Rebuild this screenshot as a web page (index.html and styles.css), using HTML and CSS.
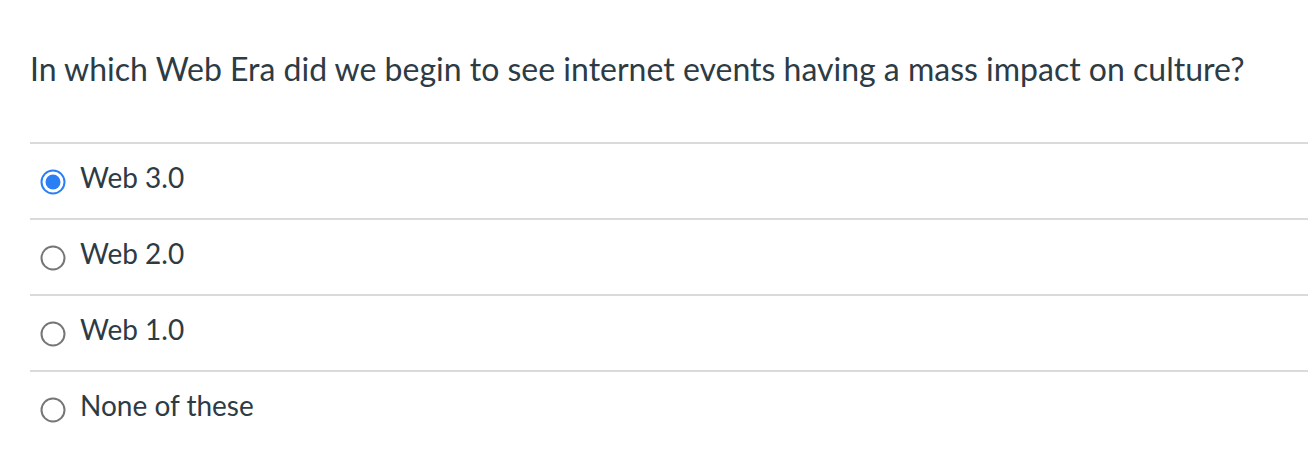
FILE: index.html
```html
<!DOCTYPE html>
<html lang="en">
<head>
  <meta charset="UTF-8">
  <title>Quiz Question</title>
  <link rel="stylesheet" href="styles.css">
</head>
<body>
  <!-- Question -->
  <div class="question">
    <h1 class="question-text">In which Web Era did we begin to see internet events having a mass impact on culture?</h1>

    <!-- Answers -->
    <ul class="answers">
      <li class="answer selected">
        <svg class="radio" width="26" height="26" viewBox="0 0 26 26">
          <circle cx="13" cy="13" r="11.5" fill="#fff" stroke="#2b7ff5" stroke-width="2"/>
          <circle cx="13" cy="13" r="7.5" fill="#2b7ff5"/>
        </svg>
        <span class="label">Web 3.0</span>
      </li>
      <li class="answer">
        <svg class="radio" width="26" height="26" viewBox="0 0 26 26">
          <circle cx="13" cy="13" r="11.5" fill="#fff" stroke="#767676" stroke-width="2"/>
        </svg>
        <span class="label">Web 2.0</span>
      </li>
      <li class="answer">
        <svg class="radio" width="26" height="26" viewBox="0 0 26 26">
          <circle cx="13" cy="13" r="11.5" fill="#fff" stroke="#767676" stroke-width="2"/>
        </svg>
        <span class="label">Web 1.0</span>
      </li>
      <li class="answer">
        <svg class="radio" width="26" height="26" viewBox="0 0 26 26">
          <circle cx="13" cy="13" r="11.5" fill="#fff" stroke="#767676" stroke-width="2"/>
        </svg>
        <span class="label">None of these</span>
      </li>
    </ul>
  </div>
</body>
</html>
```

FILE: styles.css
```css
* {
  box-sizing: border-box;
  margin: 0;
  padding: 0;
}

body {
  font-family: Lato, "Open Sans", sans-serif;
  color: #2d3b45;
  background: #fff;
}

.question {
  padding: 50px 0 0 30px;
}

.question-text {
  font-size: 32px;
  font-weight: normal;
  line-height: 38px;
  margin-bottom: 54px;
}

.answers {
  list-style: none;
}

.answer {
  display: flex;
  align-items: center;
  height: 76px;
  border-top: 2px solid #dadada;
  padding-left: 10px;
}

.radio {
  flex-shrink: 0;
  margin-top: 2px;
  margin-right: 14px;
}

.label {
  font-size: 28px;
  margin-bottom: 8px;
}
```
